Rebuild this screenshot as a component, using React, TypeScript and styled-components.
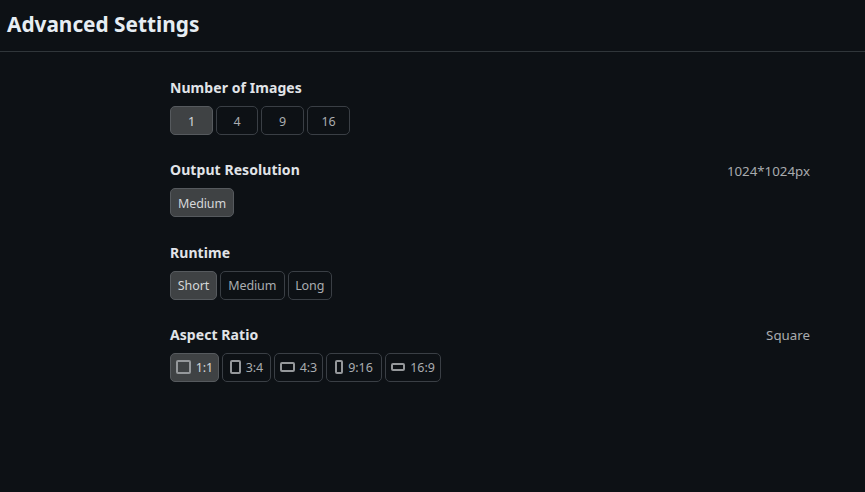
import { createGlobalStyle } from "styled-components";
import styled from "styled-components";

const GlobalStyle = createGlobalStyle`
  html, body {
    margin: 0;
    padding: 0;
    height: 100%;
    background: #0d1115;
  }
  body {
    font-family: "Noto Sans", "Open Sans", "Liberation Sans", sans-serif;
    color: #c9d1d9;
  }
`;

type Shape = { w: number; h: number };

const sections: {
  title: string;
  value?: string;
  options: { label: string; shape?: Shape; width: number }[];
}[] = [
  {
    title: "Number of Images",
    options: [
      { label: "1", width: 43 },
      { label: "4", width: 42 },
      { label: "9", width: 43 },
      { label: "16", width: 43 },
    ],
  },
  {
    title: "Output Resolution",
    value: "1024*1024px",
    options: [{ label: "Medium", width: 64 }],
  },
  {
    title: "Runtime",
    options: [
      { label: "Short", width: 47 },
      { label: "Medium", width: 64.5 },
      { label: "Long", width: 44.5 },
    ],
  },
  {
    title: "Aspect Ratio",
    value: "Square",
    options: [
      { label: "1:1", width: 49, shape: { w: 15, h: 14 } },
      { label: "3:4", width: 49, shape: { w: 11, h: 14 } },
      { label: "4:3", width: 49, shape: { w: 15, h: 10 } },
      { label: "9:16", width: 56, shape: { w: 8, h: 14 } },
      { label: "16:9", width: 56, shape: { w: 14, h: 8 } },
    ],
  },
];

const App = () => {
  return (
    <Page>
      <GlobalStyle />
      <Header>
        <Title>Advanced Settings</Title>
      </Header>
      <Content>
        {sections.map((section) => (
          <Section key={section.title}>
            <LabelRow>
              <Label>{section.title}</Label>
              {section.value && <Value>{section.value}</Value>}
            </LabelRow>
            <Options>
              {section.options.map((option, idx) => (
                <OptionBtn key={option.label} $active={idx === 0} $width={option.width}>
                  {option.shape && <RatioBox $w={option.shape.w} $h={option.shape.h} />}
                  <BtnText>{option.label}</BtnText>
                </OptionBtn>
              ))}
            </Options>
          </Section>
        ))}
      </Content>
    </Page>
  );
};
export default App;

const Page = styled.div`
  display: flex;
  flex-direction: column;
  min-height: 492px;
  background: #0d1115;
`;
const Header = styled.header`
  display: flex;
  align-items: center;
  height: 49px;
  padding: 0 7px 2px;
  border-bottom: 1px solid #30363a;
`;
const Title = styled.h1`
  margin: 0;
  font-size: 20.8px;
  font-weight: 700;
  line-height: 47px;
  color: #e6edf3;
`;
const Content = styled.main`
  display: flex;
  flex-direction: column;
  gap: 24.33px;
  padding: 25px 55px 0 170px;
`;
const Section = styled.section`
  display: flex;
  flex-direction: column;
  gap: 8px;
`;
const LabelRow = styled.div`
  display: flex;
  justify-content: space-between;
  align-items: center;
  height: 21px;
`;
const Label = styled.span`
  font-size: 14px;
  font-weight: 700;
  letter-spacing: 0.07px;
  color: #e1e4e8;
`;
const Value = styled.span`
  padding-top: 2px;
  font-size: 13.3px;
  color: #a8abae;
`;
const Options = styled.div`
  display: flex;
  gap: 3px;
`;
const OptionBtn = styled.button<{ $active?: boolean; $width: number }>`
  display: flex;
  align-items: center;
  justify-content: center;
  gap: 5px;
  box-sizing: border-box;
  height: 29px;
  width: ${({ $width }) => $width}px;
  padding: 0;
  border-radius: 5px;
  border: 1px solid ${({ $active }) => ($active ? "#565a5e" : "#3a3f45")};
  background: ${({ $active }) => ($active ? "#3f4244" : "transparent")};
  color: ${({ $active }) => ($active ? "#d5d7d9" : "#aaadb0")};
  font-family: inherit;
  font-size: 12.5px;
  letter-spacing: -0.1px;
`;
const BtnText = styled.span`
  padding-top: 1px;
`;
const RatioBox = styled.span<{ $w: number; $h: number }>`
  box-sizing: border-box;
  width: ${({ $w }) => $w}px;
  height: ${({ $h }) => $h}px;
  border: 2px solid #95989b;
  border-radius: 2px;
`;
